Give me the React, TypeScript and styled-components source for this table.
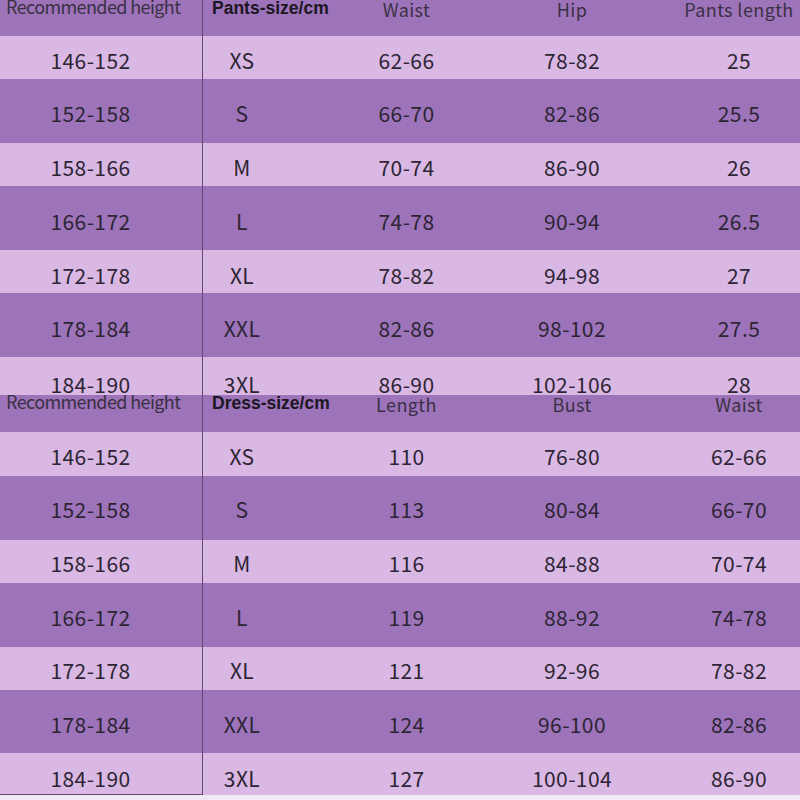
import React from "react"
import styled, { createGlobalStyle } from "styled-components"

const GlobalStyle = createGlobalStyle`
  html, body {
    margin: 0;
    padding: 0;
    background: #f1e9f3;
  }
  #root {
    width: 800px;
  }
`

const colors = {
  dark: "#9d74ba",
  light: "#d9b8e3",
  ink: "#2d2434",
  headInk: "#3a3043",
  rule: "#5e4b6d",
}

interface SizeRow {
  height: string
  size: string
  a: string
  b: string
  c: string
}

interface TableProps {
  sizeLabel: string
  labels: [string, string, string]
  rows: SizeRow[]
  headHeight: number
  rowHeights: number[]
  shifts: number[]
  closed?: boolean
}

const Page = styled.div`
  display: flex;
  flex-direction: column;
  width: 800px;
`

const TableBlock = styled.div`
  display: flex;
  flex-direction: column;
`

const Row = styled.div<{ $h: number; $tone: "dark" | "light"; $head?: boolean }>`
  display: grid;
  grid-template-columns: 203px 121px 165px 166px 145px;
  height: ${(p) => p.$h}px;
  background: ${(p) => (p.$tone === "dark" ? colors.dark : colors.light)};
  align-items: ${(p) => (p.$head ? "start" : "center")};
  position: relative;
  z-index: ${(p) => (p.$head ? 1 : 0)};
  overflow: ${(p) => (p.$head ? "hidden" : "visible")};
`

const HeightCell = styled.div<{ $shift: number; $closed?: boolean }>`
  align-self: stretch;
  display: flex;
  align-items: center;
  justify-content: center;
  padding-right: 21px;
  padding-top: ${(p) => p.$shift * 2}px;
  border-right: 1px solid ${colors.rule};
  border-bottom: ${(p) => (p.$closed ? `1px solid ${colors.rule}` : "none")};
  box-sizing: border-box;
  font-family: "Noto Sans CJK SC", "Noto Sans", sans-serif;
  font-size: 21px;
  letter-spacing: 0.4px;
  color: ${colors.ink};
`

const Cell = styled.div<{ $shift: number; $offset?: number }>`
  align-self: stretch;
  display: flex;
  align-items: center;
  justify-content: center;
  padding-top: ${(p) => p.$shift * 2}px;
  padding-left: ${(p) => Math.max(0, p.$offset ?? 0)}px;
  padding-right: ${(p) => Math.max(0, -(p.$offset ?? 0))}px;
  font-family: "Noto Sans CJK SC", "Noto Sans", sans-serif;
  font-size: 21px;
  letter-spacing: 0.4px;
  color: ${colors.ink};
  white-space: nowrap;
`

const HeadLabel = styled.div`
  align-self: stretch;
  padding-left: 6px;
  margin-top: -3px;
  border-right: 1px solid ${colors.rule};
  box-sizing: border-box;
  font-family: "Noto Sans CJK SC", "Noto Sans", sans-serif;
  font-size: 18px;
  line-height: 18px;
  letter-spacing: -0.6px;
  color: ${colors.headInk};
  white-space: nowrap;
`

const HeadSize = styled.div`
  padding-left: 9px;
  margin-top: -2px;
  font-family: "Liberation Sans", Arial, sans-serif;
  font-weight: bold;
  font-size: 17.5px;
  line-height: 20px;
  color: #1c1622;
  white-space: nowrap;
`

const HeadCol = styled.div<{ $offset?: number }>`
  text-align: center;
  margin-top: -1px;
  padding-left: ${(p) => Math.max(0, p.$offset ?? 0)}px;
  font-family: "Noto Sans CJK SC", "Noto Sans", sans-serif;
  font-size: 18px;
  line-height: 20px;
  letter-spacing: 0.4px;
  color: ${colors.headInk};
  white-space: nowrap;
`

const SizeTable: React.FC<TableProps> = ({ sizeLabel, labels, rows, headHeight, rowHeights, shifts, closed }) => (
  <TableBlock>
    <Row $h={headHeight} $tone="dark" $head>
      <HeadLabel>Recommended height</HeadLabel>
      <HeadSize>{sizeLabel}</HeadSize>
      <HeadCol>{labels[0]}</HeadCol>
      <HeadCol>{labels[1]}</HeadCol>
      <HeadCol $offset={23}>{labels[2]}</HeadCol>
    </Row>
    {rows.map((r, i) => (
      <Row key={r.size} $h={rowHeights[i]} $tone={i % 2 === 0 ? "light" : "dark"}>
        <HeightCell $shift={shifts[i]} $closed={closed && i === rows.length - 1}>
          {r.height}
        </HeightCell>
        <Cell $shift={shifts[i]} $offset={-43}>
          {r.size}
        </Cell>
        <Cell $shift={shifts[i]}>{r.a}</Cell>
        <Cell $shift={shifts[i]}>{r.b}</Cell>
        <Cell $shift={shifts[i]} $offset={23}>
          {r.c}
        </Cell>
      </Row>
    ))}
  </TableBlock>
)

const heights = ["146-152", "152-158", "158-166", "166-172", "172-178", "178-184", "184-190"]
const sizes = ["XS", "S", "M", "L", "XL", "XXL", "3XL"]

const pants: SizeRow[] = [
  ["62-66", "78-82", "25"],
  ["66-70", "82-86", "25.5"],
  ["70-74", "86-90", "26"],
  ["74-78", "90-94", "26.5"],
  ["78-82", "94-98", "27"],
  ["82-86", "98-102", "27.5"],
  ["86-90", "102-106", "28"],
].map(([a, b, c], i) => ({ height: heights[i], size: sizes[i], a, b, c }))

const dress: SizeRow[] = [
  ["110", "76-80", "62-66"],
  ["113", "80-84", "66-70"],
  ["116", "84-88", "70-74"],
  ["119", "88-92", "74-78"],
  ["121", "92-96", "78-82"],
  ["124", "96-100", "82-86"],
  ["127", "100-104", "86-90"],
].map(([a, b, c], i) => ({ height: heights[i], size: sizes[i], a, b, c }))

export default function App() {
  return (
    <>
      <GlobalStyle />
      <Page>
        <SizeTable
          sizeLabel="Pants-size/cm"
          labels={["Waist", "Hip", "Pants length"]}
          rows={pants}
          headHeight={36}
          rowHeights={[43, 64, 43, 64, 43, 64, 38]}
          shifts={[2.5, 2, 2.5, 3, 3.5, 3, 6]}
        />
        <SizeTable
          sizeLabel="Dress-size/cm"
          labels={["Length", "Bust", "Waist"]}
          rows={dress}
          headHeight={37}
          rowHeights={[44, 64, 43, 64, 43, 63, 42]}
          shifts={[2, 1, 1.5, 2, 1.5, 2.5, 4]}
          closed
        />
      </Page>
    </>
  )
}
